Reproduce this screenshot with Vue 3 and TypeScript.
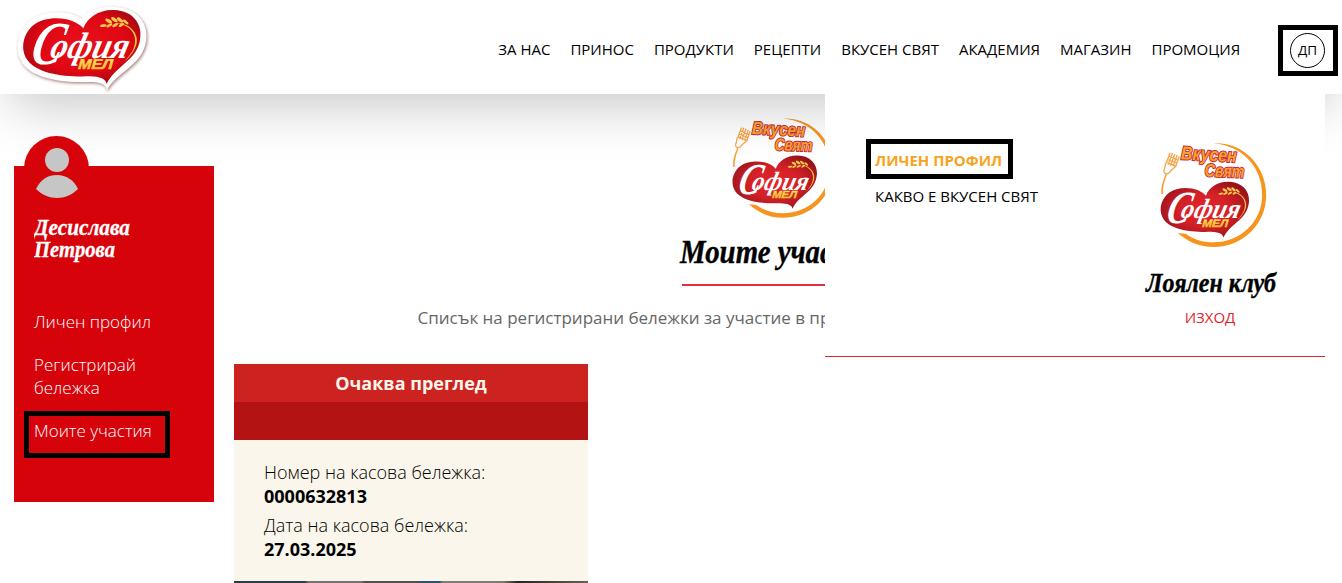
<script setup lang="ts">
const navItems: string[] = ['ЗА НАС', 'ПРИНОС', 'ПРОДУКТИ', 'РЕЦЕПТИ', 'ВКУСЕН СВЯТ', 'АКАДЕМИЯ', 'МАГАЗИН', 'ПРОМОЦИЯ']
const receipt = [
  { label: 'Номер на касова бележка:', value: '0000632813' },
  { label: 'Дата на касова бележка:', value: '27.03.2025' },
]
</script>

<template>
  <div class="page">
    <svg class="defs" width="0" height="0">
      <defs>
        <radialGradient id="heartFill" cx="0.5" cy="0.45" r="0.6">
          <stop offset="0" stop-color="#e8101a" />
          <stop offset="0.65" stop-color="#df0713" />
          <stop offset="1" stop-color="#9c0a12" />
        </radialGradient>
        <radialGradient id="clubHeart" cx="0.5" cy="0.5" r="0.6">
          <stop offset="0" stop-color="#e3242b" />
          <stop offset="0.5" stop-color="#d32027" />
          <stop offset="1" stop-color="#8f1218" />
        </radialGradient>
        <linearGradient id="gold" x1="0" y1="0" x2="0" y2="1">
          <stop offset="0" stop-color="#fff27a" />
          <stop offset="1" stop-color="#f6a81c" />
        </linearGradient>
        <path
          id="heart"
          d="M320 252C317 236 300 230 270 229C195 232 112 222 82 180C54 140 75 76 130 60C180 47 228 60 250 85C262 52 298 28 342 30C402 32 431 76 419 125C404 186 345 198 320 252Z"
        />
        <g id="brand">
          <g class="script" fill="#fff">
            <text x="0" y="0" font-size="184" textLength="92" lengthAdjust="spacingAndGlyphs" transform="translate(86 192) skewX(-14)">С</text>
            <text x="0" y="0" font-size="110" textLength="234" lengthAdjust="spacingAndGlyphs" transform="translate(146 173) skewX(-14)">офия</text>
          </g>
          <text class="mill" x="0" y="0" font-size="43" textLength="104" lengthAdjust="spacingAndGlyphs" transform="translate(234 208) skewX(-4)" fill="url(#gold)" stroke="#f8d63c" stroke-width="1.5">МЕЛ</text>
          <path d="M350 68C398 70 424 112 404 146C396 162 386 174 374 183C392 165 407 143 405 118C403 92 384 76 350 68Z" fill="#f7c33b" />
          <g fill="#f9c94c">
            <ellipse cx="310" cy="77" rx="10" ry="4" transform="rotate(-8 310 77)" />
            <ellipse cx="326" cy="63" rx="11" ry="5" transform="rotate(28 326 63)" />
            <ellipse cx="328" cy="76" rx="10" ry="4" transform="rotate(-30 328 76)" />
            <ellipse cx="343" cy="59" rx="11" ry="5" transform="rotate(34 343 59)" />
            <ellipse cx="346" cy="75" rx="10" ry="4" transform="rotate(-30 346 75)" />
            <ellipse cx="360" cy="60" rx="11" ry="5" transform="rotate(38 360 60)" />
            <ellipse cx="364" cy="75" rx="9" ry="4" transform="rotate(-30 364 75)" />
            <ellipse cx="377" cy="66" rx="10" ry="4" transform="rotate(40 377 66)" />
          </g>
        </g>
        <symbol id="club" viewBox="90 36 320 318">
          <path d="M250 40C340 36 408 108 408 195C408 283 338 351 250 351C210 351 174 337 143 309L166 311C190 328 218 337 250 337C330 337 396 276 396 195C396 112 338 48 250 40Z" fill="#f7941e" />
          <path d="M94 191C93 172 98 152 107 134L109 136C101 154 97 172 98 191Z" fill="#f7941e" stroke="#f7941e" />
          <g fill="none" stroke="#f5a54a" stroke-width="4">
            <path d="M120 68L108 100M127 69L114 104M134 72L121 107M141 75L129 109M147 79L136 111M115 78L142 90M112 88L139 99M109 97L136 108" />
            <path d="M106 99C106 113 101 119 101 125C103 133 115 133 118 127C123 118 132 116 137 108M109 131L106 138" />
          </g>
          <g class="club-word" fill="#f9a12c" stroke="#c4273c" stroke-width="6" paint-order="stroke">
            <text x="152" y="88" font-size="56" textLength="167" lengthAdjust="spacingAndGlyphs" transform="rotate(3 152 88)">Вкусен</text>
            <text x="223" y="139" font-size="54" textLength="119" lengthAdjust="spacingAndGlyphs" transform="rotate(2 223 139)">Свят</text>
          </g>
          <g transform="translate(39 133) scale(.753)">
            <use href="#heart" fill="url(#clubHeart)" />
            <use href="#brand" />
          </g>
        </symbol>
      </defs>
    </svg>

    <header class="header">
      <svg class="logo" viewBox="0 0 510 330" width="170" height="110">
        <path
          class="logo-edge"
          d="M321 270C316 252 302 246 270 246C182 248 100 235 68 191C35 143 57 63 123 44C174 29 220 38 246 57C265 31 302 18 344 21C417 24 451 77 436 134C419 199 351 216 321 270Z"
        />
        <use href="#heart" fill="url(#heartFill)" />
        <use href="#brand" />
      </svg>
      <nav class="nav">
        <a v-for="item in navItems" :key="item">{{ item }}</a>
      </nav>
      <div class="user-box"><span class="user">ДП</span></div>

      <section class="dropdown">
        <div class="drop-links">
          <a class="current">ЛИЧЕН ПРОФИЛ</a>
          <a class="about">КАКВО Е ВКУСЕН СВЯТ</a>
        </div>
        <div class="drop-club">
          <svg class="drop-logo" width="107" height="106"><use href="#club" /></svg>
          <svg class="drop-title" width="140" height="34">
            <text x="6" y="24" font-size="27" textLength="130" lengthAdjust="spacingAndGlyphs">Лоялен клуб</text>
          </svg>
          <a class="exit">ИЗХОД</a>
        </div>
      </section>
    </header>

    <div class="body">
      <aside class="sidebar">
        <svg class="avatar" width="66" height="66" viewBox="0 0 66 66">
          <circle cx="32.5" cy="32.5" r="32.5" fill="#d7030b" />
          <circle cx="33" cy="24" r="12" fill="#c6c6c6" />
          <path d="M12 53C17 43 24 39 33 39C42 39 50 44 54 53C42 65 24 65 12 53Z" fill="#c6c6c6" />
        </svg>
        <svg class="name" width="120" height="52" fill="#fff">
          <text x="0" y="20" font-size="23" textLength="96" lengthAdjust="spacingAndGlyphs">Десислава</text>
          <text x="0" y="42" font-size="23" textLength="81" lengthAdjust="spacingAndGlyphs">Петрова</text>
        </svg>
        <ul class="menu">
          <li>Личен профил</li>
          <li>Регистрирай<br />бележка</li>
          <li class="active">Моите участия</li>
        </ul>
      </aside>

      <main class="content">
        <svg class="main-logo" width="102" height="102"><use href="#club" /></svg>
        <svg class="main-title" width="206" height="50">
          <text x="1" y="31" font-size="34" textLength="206" lengthAdjust="spacingAndGlyphs">Моите участия</text>
        </svg>
        <div class="rule"></div>
        <p class="lead">Списък на регистрирани бележки за участие в промоцията</p>
        <article class="card">
          <div class="card-status">Очаква преглед</div>
          <div class="card-band"></div>
          <dl class="card-info">
            <template v-for="row in receipt" :key="row.label">
              <dt>{{ row.label }}</dt>
              <dd>{{ row.value }}</dd>
            </template>
          </dl>
          <div class="card-photo"></div>
        </article>
      </main>
    </div>
  </div>
</template>

<style>
body { margin: 0; background: #fff; overflow: hidden; }
</style>

<style scoped>
.page { width: 1342px; height: 583px; overflow: hidden; font-family: "Open Sans", "Noto Sans", sans-serif; color: #000; background: #fff; }
.defs { position: absolute; }
.script, .drop-title, .name, .main-title { font-family: "Liberation Serif", serif; font-weight: 700; font-style: italic; }
.drop-title, .main-title { stroke: #000; stroke-width: .4px; }
.name { stroke: #fff; stroke-width: .3px; }
.mill, .club-word { font-family: "Liberation Sans", sans-serif; font-weight: 700; font-style: italic; }
.header { position: relative; z-index: 2; display: flex; height: 94px; background: #fff; box-shadow: 0 20px 55px -10px rgba(0, 0, 0, .23); }
.logo { flex: none; overflow: visible; }
.logo-edge { fill: #fff; filter: drop-shadow(3px 4px 4px rgba(120, 60, 50, .65)); }
.nav { display: flex; gap: 20px; margin-left: auto; margin-right: 37.8px; padding-top: 39px; font-size: 15px; line-height: 20px; white-space: nowrap; }
.user-box { box-sizing: border-box; width: 60px; height: 51px; margin: 25px 4px 0 0; border: 5px solid #000; padding: 3px 0 0 7px; flex: none; }
.user { box-sizing: border-box; display: block; width: 35px; height: 35px; border: 1px solid #000; border-radius: 50%; font-size: 13.5px; line-height: 32px; text-align: center; }
.dropdown { position: absolute; left: 825px; top: 94px; box-sizing: border-box; width: 500px; height: 263px; border-bottom: 1px solid #e2282f; background: #fff; display: flex; justify-content: space-between; font-size: 15px; }
.drop-links { display: flex; flex-direction: column; align-items: flex-start; padding: 45px 0 0 41px; white-space: nowrap; }
.current { box-sizing: border-box; width: 147px; height: 40px; border: 5px solid #000; padding-left: 4px; color: #faa21b; font-weight: 700; font-size: 15px; line-height: 32px; }
.about { margin: 7px 0 0 9px; line-height: 20px; }
.drop-club { display: flex; flex-direction: column; align-items: center; width: 140px; margin-right: 45px; }
.drop-logo { margin: 48px 0 0 7px; }
.drop-title { margin-top: 20px; overflow: visible; }
.exit { margin-top: 5px; color: #e0242e; line-height: 20px; }
.body { display: flex; gap: 20px; padding-left: 14px; }
.sidebar { box-sizing: border-box; width: 200px; height: 336px; margin-top: 72px; background: #d7030b; flex: none; color: #fff; position: relative; z-index: 3; }
.avatar { display: block; margin: -30px 0 0 10px; }
.name { display: block; margin: 13px 0 0 20px; }
.menu { list-style: none; margin: 43px 0 0 10px; padding: 0; font-size: 17px; line-height: 23px; font-weight: 300; }
.menu li { padding-left: 10px; margin-bottom: 20px; }
.menu .active { box-sizing: border-box; width: 146px; height: 47px; border: 5px solid #000; padding: 3px 0 0 5px; margin-top: -8px; }
.content { width: 1096px; display: flex; flex-direction: column; }
.main-logo { margin: 23px 0 0 498px; }
.main-title { margin: 13px 0 0 445px; overflow: visible; }
.rule { width: 200px; height: 2px; margin: 2px 0 0 448px; background: #e2303a; }
.lead { margin: 20px 0 0 183.5px; color: #666; font-size: 17px; line-height: 24px; white-space: nowrap; }
.card { box-sizing: border-box; width: 354px; margin-top: 34px; background: #faf6eb; }
.card-status { height: 38px; background: #cc2320; color: #faf6eb; font-size: 18px; font-weight: 700; line-height: 39px; text-align: center; }
.card-band { height: 38px; background: #b31312; }
.card-info { box-sizing: border-box; margin: 0; height: 141px; padding: 20px 30px 0; font-size: 18px; line-height: 25px; }
.card-info dt { font-weight: 300; }
.card-info dd { margin: -1px 0 4px; font-weight: 700; }
.card-photo { height: 12px; background: linear-gradient(90deg, #303b48 0 20%, #777170 21% 36%, #53504f 37% 52%, #315273 53% 58%, #817b76 59% 76%, #292523 80%, #67605c 100%); }
</style>
